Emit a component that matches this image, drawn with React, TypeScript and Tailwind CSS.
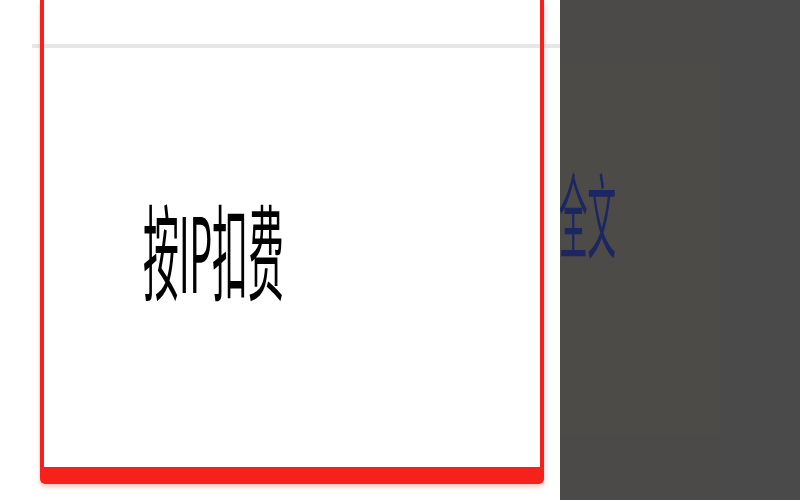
import React from "react";

export default function App() {
  return (
    <div
      className="w-[800px] h-[500px] flex overflow-hidden bg-white"
      style={{ fontFamily: '"Noto Sans CJK SC", "Noto Sans", sans-serif' }}
    >
      <div className="relative w-[560px] h-full shrink-0 bg-white">
        <div className="absolute top-[44px] left-[32px] w-[528px] h-[4px] bg-[#e6e6e6]" />
        <div className="relative z-10 ml-[40px] w-[504px] h-[484px] border-x-4 border-b-[17px] border-[#f5211a] rounded-b-[5px] shadow-[0_3px_4px_rgba(245,33,26,0.25)] flex flex-col">
          <div className="pl-[99px] pt-[196px]">
            <div className="origin-left scale-x-[0.345] whitespace-nowrap text-[104px] leading-none text-black">
              按IP扣费
            </div>
          </div>
        </div>
      </div>
      <div className="flex-1 h-full bg-[#4b4a48] flex overflow-hidden">
        <div className="w-[160px] h-full flex flex-col py-[65px] shrink-0">
          <div className="relative flex-1 bg-[#4d4b47]">
            <div className="pt-[100px] -ml-[1px]">
              <div className="origin-left scale-x-[0.31] whitespace-nowrap text-[92px] leading-none text-[#1c2660]">
                全文
              </div>
            </div>
          </div>
        </div>
        <div className="flex-1 h-full bg-[#4a4a4a]" />
      </div>
    </div>
  );
}
